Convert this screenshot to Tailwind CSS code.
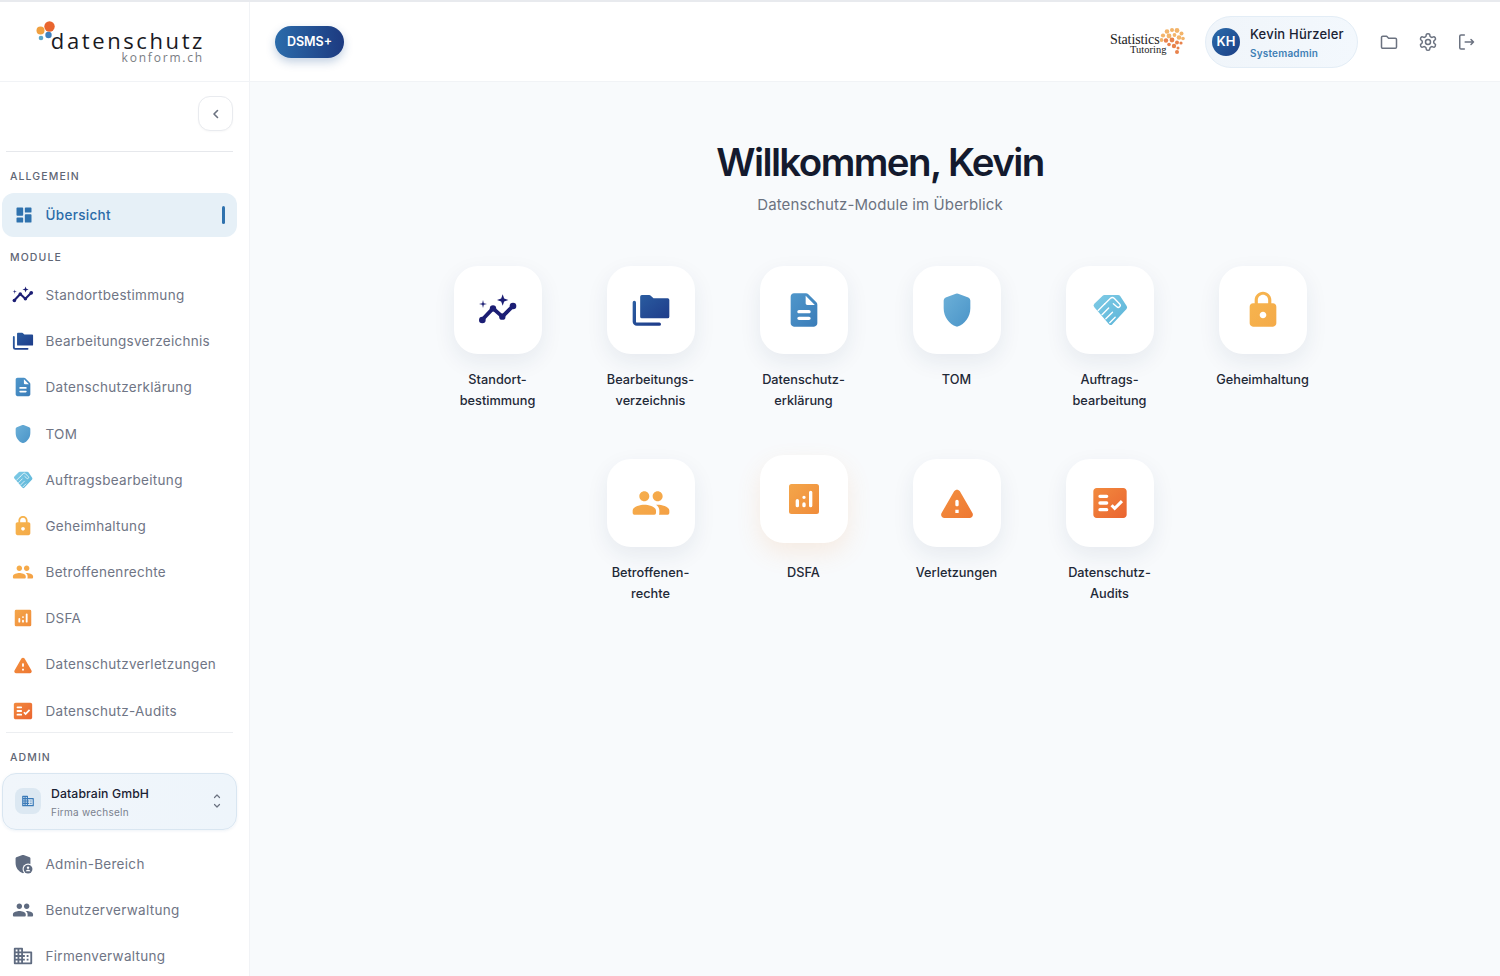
<!DOCTYPE html>
<html lang="de">
<head>
  <meta charset="UTF-8" />
  <title>DSMS+ Übersicht</title>
  <script src="https://cdn.jsdelivr.net/npm/@tailwindcss/browser@4"></script>
</head>
<body class="h-screen overflow-hidden bg-white font-['Inter',sans-serif] text-gray-800">
  <!-- shared icons + gradients -->
  <svg class="block h-0 w-0" aria-hidden="true">
    <defs>
      <linearGradient id="gNavy" x1="0" y1="0" x2="1" y2="1"><stop offset="0" stop-color="#1c1c70"/><stop offset="1" stop-color="#1b1f78"/></linearGradient>
      <linearGradient id="gFolder" x1="0" y1="0" x2="1" y2="1"><stop offset="0" stop-color="#2a5ca0"/><stop offset="1" stop-color="#1e3c8a"/></linearGradient>
      <linearGradient id="gDoc" x1="0" y1="0" x2="1" y2="1"><stop offset="0" stop-color="#4f97cb"/><stop offset="1" stop-color="#3a7cb8"/></linearGradient>
      <linearGradient id="gShield" x1="0" y1="0" x2="1" y2="1"><stop offset="0" stop-color="#6cb0d8"/><stop offset="1" stop-color="#4a94c8"/></linearGradient>
      <linearGradient id="gHand" x1="0" y1="0" x2="1" y2="1"><stop offset="0" stop-color="#80cbe6"/><stop offset="1" stop-color="#5ab4d8"/></linearGradient>
      <linearGradient id="gLock" x1="0" y1="0" x2="1" y2="1"><stop offset="0" stop-color="#f7b650"/><stop offset="1" stop-color="#f4aa48"/></linearGradient>
      <linearGradient id="gPeople" x1="0" y1="0" x2="1" y2="1"><stop offset="0" stop-color="#f6b04e"/><stop offset="1" stop-color="#f4a044"/></linearGradient>
      <linearGradient id="gDsfa" x1="0" y1="0" x2="1" y2="1"><stop offset="0" stop-color="#f4a64a"/><stop offset="1" stop-color="#f08c3a"/></linearGradient>
      <linearGradient id="gWarn" x1="0" y1="0" x2="1" y2="1"><stop offset="0" stop-color="#f39040"/><stop offset="1" stop-color="#ee7832"/></linearGradient>
      <linearGradient id="gAudit" x1="0" y1="0" x2="1" y2="1"><stop offset="0" stop-color="#f28a3e"/><stop offset="1" stop-color="#ea6430"/></linearGradient>

      <symbol id="i-dash" viewBox="0 0 24 24"><path d="M4 3h6a1 1 0 0 1 1 1v8a1 1 0 0 1-1 1H4a1 1 0 0 1-1-1V4a1 1 0 0 1 1-1zm0 12h6a1 1 0 0 1 1 1v4a1 1 0 0 1-1 1H4a1 1 0 0 1-1-1v-4a1 1 0 0 1 1-1zm10-4h6a1 1 0 0 1 1 1v8a1 1 0 0 1-1 1h-6a1 1 0 0 1-1-1v-8a1 1 0 0 1 1-1zm0-8h6a1 1 0 0 1 1 1v4a1 1 0 0 1-1 1h-6a1 1 0 0 1-1-1V4a1 1 0 0 1 1-1z"/></symbol>
      <symbol id="i-graph" viewBox="0 0 24 24">
        <path d="M2.400 18 9 11l5.600 5 6.400-6.400" fill="none" stroke="url(#gNavy)" stroke-width="2.300" stroke-linejoin="round"/>
        <circle cx="2.600" cy="18" r="2"/><circle cx="9" cy="11" r="1.900"/><circle cx="14.600" cy="16" r="1.900"/><circle cx="21" cy="9.600" r="2"/>
        <path d="m14.800 2.600.9 2.500 2.500.9-2.500.9-.9 2.500-.9-2.500-2.500-.9 2.500-.9z"/>
        <path d="m3 6 .45 1.950 1.950.45-1.950.45L3 10.800l-.45-1.950L.6 8.400l1.950-.45z"/>
      </symbol>
      <symbol id="i-folders" viewBox="0 0 24 24">
        <path d="M2 7.500V19a1.500 1.500 0 0 0 1.500 1.500H17" fill="none" stroke="url(#gFolder)" stroke-width="2" stroke-linecap="round"/>
        <path d="M6.500 3H11a1 1 0 0 1 .7.3L13.500 5H22a1 1 0 0 1 1 1v10a1 1 0 0 1-1 1H6.500a1 1 0 0 1-1-1V4a1 1 0 0 1 1-1z"/>
      </symbol>
      <symbol id="i-doc" viewBox="0 0 24 24"><path d="M14.590 2.590c-.38-.38-.89-.59-1.420-.59H6c-1.100 0-2 .9-2 2v16c0 1.100.89 2 1.990 2H18c1.100 0 2-.9 2-2V8.830c0-.53-.21-1.040-.59-1.410l-4.820-4.830zM15 18H9c-.55 0-1-.45-1-1s.45-1 1-1h6c.55 0 1 .45 1 1s-.45 1-1 1zm0-4H9c-.55 0-1-.45-1-1s.45-1 1-1h6c.55 0 1 .45 1 1s-.45 1-1 1zm-2-6V3.500L18.500 9H14c-.55 0-1-.45-1-1z"/></symbol>
      <symbol id="i-shield" viewBox="0 0 24 24"><path d="M11.300 2.200 5.200 4.500A2 2 0 0 0 4 6.300V11c0 5.200 3.400 9.700 7.600 10.900.3.1.5.1.8 0C16.600 20.700 20 16.200 20 11V6.300a2 2 0 0 0-1.200-1.800l-6.100-2.300a2 2 0 0 0-1.400 0z"/></symbol>
      <symbol id="i-hand" viewBox="0 0 24 24">
        <path d="M2.600 8.300 7.600 3.400a1.500 1.500 0 0 1 1-.4h8.300a1.500 1.500 0 0 1 1.100.5l4 6.100a1.500 1.500 0 0 1-.1 1.800l-8.500 9.100a1.400 1.400 0 0 1-2 0L2.600 10.400a1.500 1.500 0 0 1 0-2.100z"/>
        <g fill="none" stroke="#fff" stroke-width="0.8" stroke-linecap="round" stroke-linejoin="round">
          <path d="M8.800 8.400 12.300 5a1.600 1.600 0 0 1 2.200 0l3.300 3.400a1.200 1.200 0 0 1-1.700 1.700L14 8.200"/>
          <path d="m4.900 12.300 4-4m-1.700 6.500 4-4m-1.700 6.500 4-4m-1.700 6.300 3.300-3.300"/>
        </g>
      </symbol>
      <symbol id="i-lock" viewBox="0 0 24 24"><path d="M18 8h-1V6c0-2.760-2.240-5-5-5S7 3.240 7 6v2H6c-1.100 0-2 .9-2 2v10c0 1.100.9 2 2 2h12c1.100 0 2-.9 2-2V10c0-1.100-.9-2-2-2zm-6 9c-1.100 0-2-.9-2-2s.9-2 2-2 2 .9 2 2-.9 2-2 2zm3.100-9H8.900V6c0-1.710 1.390-3.100 3.100-3.100 1.710 0 3.100 1.390 3.100 3.100v2z"/></symbol>
      <symbol id="i-people" viewBox="0 0 24 24"><path d="M16 11c1.660 0 2.990-1.340 2.990-3S17.660 5 16 5c-1.660 0-3 1.340-3 3s1.340 3 3 3zm-8 0c1.660 0 2.990-1.340 2.990-3S9.660 5 8 5C6.340 5 5 6.340 5 8s1.340 3 3 3zm0 2c-2.330 0-7 1.170-7 3.500V18a1 1 0 0 0 1 1h12a1 1 0 0 0 1-1v-1.500c0-2.330-4.670-3.500-7-3.500zm8 0c-.29 0-.62.02-.97.05 1.160.84 1.970 1.970 1.970 3.450V18a3 3 0 0 1-.2 1H22a1 1 0 0 0 1-1v-1.500c0-2.330-4.670-3.500-7-3.500z"/></symbol>
      <symbol id="i-chart" viewBox="0 0 24 24"><path d="M4.500 3h15A1.500 1.500 0 0 1 21 4.500v15a1.500 1.500 0 0 1-1.500 1.500h-15A1.500 1.500 0 0 1 3 19.500v-15A1.500 1.500 0 0 1 4.500 3zM8 12a1 1 0 0 0-1 1v3a1 1 0 0 0 2 0v-3a1 1 0 0 0-1-1zm4 2a1 1 0 0 0-1 1v1a1 1 0 0 0 2 0v-1a1 1 0 0 0-1-1zm0-4a1 1 0 0 0-1 1 1 1 0 0 0 2 0 1 1 0 0 0-1-1zm4-3a1 1 0 0 0-1 1v8a1 1 0 0 0 2 0V8a1 1 0 0 0-1-1z" fill-rule="evenodd"/></symbol>
      <symbol id="i-warn" viewBox="0 0 24 24"><path d="M4.470 21h15.060c1.540 0 2.500-1.670 1.730-3L13.730 4.990c-.77-1.330-2.690-1.330-3.460 0L2.740 18c-.77 1.330.19 3 1.730 3zM12 14c-.55 0-1-.45-1-1v-2c0-.55.45-1 1-1s1 .45 1 1v2c0 .55-.45 1-1 1zm1 4h-2v-2h2v2z"/></symbol>
      <symbol id="i-audit" viewBox="0 0 24 24"><path d="M20 3H4c-1.100 0-2 .9-2 2v14c0 1.100.9 2 2 2h16c1.100 0 2-.9 2-2V5c0-1.100-.9-2-2-2zM10 17H6a1 1 0 0 1 0-2h4a1 1 0 0 1 0 2zm0-4H6a1 1 0 0 1 0-2h4a1 1 0 0 1 0 2zm0-4H6a1 1 0 0 1 0-2h4a1 1 0 0 1 0 2zm4.820 7.500L12.300 14l1.300-1.300 1.220 1.200 3.700-3.700 1.300 1.300z"/></symbol>
      <symbol id="i-admin" viewBox="0 0 24 24">
        <path d="M11.300 2.200 4.700 4.600A1.200 1.200 0 0 0 3.900 5.700V11c0 5.200 3.400 9.700 8.100 11 4.700-1.300 8.100-5.800 8.100-11V5.700a1.200 1.200 0 0 0-.8-1.100l-6.600-2.400a2 2 0 0 0-1.400 0z"/>
        <circle cx="17.500" cy="17.500" r="6" fill="#fff"/>
        <circle cx="17.500" cy="17.500" r="4.800"/>
        <circle cx="17.500" cy="16" r="1.300" fill="#fff"/>
        <path d="M15 20c.5-1.200 1.500-1.600 2.500-1.600s2 .4 2.500 1.600z" fill="#fff"/>
      </symbol>
      <symbol id="i-biz" viewBox="0 0 24 24"><path d="M12 7V4a1 1 0 0 0-1-1H3a1 1 0 0 0-1 1v16a1 1 0 0 0 1 1h18a1 1 0 0 0 1-1V8a1 1 0 0 0-1-1H12zM6 19H4v-2h2v2zm0-4H4v-2h2v2zm0-4H4V9h2v2zm0-4H4V5h2v2zm4 12H8v-2h2v2zm0-4H8v-2h2v2zm0-4H8V9h2v2zm0-4H8V5h2v2zm10 12h-8v-2h2v-2h-2v-2h2v-2h-2V9h8v10zm-2-8h-2v2h2v-2zm0 4h-2v2h2v-2z"/></symbol>
    </defs>
  </svg>

  <div class="h-[2px] bg-[#e8eaee]"></div>

  <!-- top bar -->
  <header class="flex h-[80px] border-b border-[#f1f3f6] bg-white">
    <div class="flex w-[250px] shrink-0 items-center justify-end border-r border-[#f1f3f6] pr-[47px]">
      <div class="relative w-[166px] pt-[10px]">
        <svg class="absolute left-0 -top-[1px] h-[26px] w-[24px]" viewBox="0 0 24 26">
          <circle cx="13.500" cy="7.500" r="5.200" fill="#e9652e"/>
          <circle cx="4.500" cy="11.500" r="4" fill="#f0a040"/>
          <circle cx="12.500" cy="16" r="3.200" fill="#3f80bd"/>
          <circle cx="5" cy="19" r="2.300" fill="#5ba7c9"/>
        </svg>
        <div class="-mr-[3px] text-right font-['Open_Sans',sans-serif] text-[22px] leading-[20px] tracking-[2.600px] text-[#1a1a1f]">datenschutz</div>
        <div class="-mr-[2px] mt-[2px] text-right font-['Open_Sans',sans-serif] text-[12px] leading-[12px] tracking-[1.800px] text-[#7a7d83]">konform.ch</div>
      </div>
    </div>
    <div class="flex flex-1 items-center pl-[25px] pr-[24px]">
      <button class="flex h-[32px] w-[69px] items-center justify-center rounded-full bg-gradient-to-r from-[#2b6cab] to-[#1d3a80] text-[12.500px] font-semibold leading-[32px] text-white shadow-[0_4px_10px_rgba(40,90,150,0.28)]">DSMS+</button>
      <div class="ml-auto flex items-center">
        <!-- statistics tutoring logo -->
        <div class="relative mr-[20px] h-[30px] w-[75px] font-['Liberation_Serif',serif] text-[#222]">
          <div class="pt-[8px] text-[14px] leading-[10px] tracking-[-0.1px]">Statistics</div>
          <div class="pl-[20px] text-[10.500px] leading-[10px]">Tutoring</div>
          <svg class="absolute right-0 top-0 h-[27px] w-[26px]" viewBox="0 0 26 27">
            <g fill="#f3b46a">
              <circle cx="8" cy="4.500" r="2.300"/><circle cx="13" cy="3" r="2"/><circle cx="18" cy="3.500" r="2.400"/><circle cx="22.500" cy="6.500" r="2"/>
              <circle cx="4" cy="8.500" r="2.100"/><circle cx="10" cy="9" r="2.400"/><circle cx="15.500" cy="8" r="1.900"/><circle cx="20" cy="10.500" r="2.300"/>
              <circle cx="24" cy="11.500" r="1.800"/><circle cx="2.500" cy="13" r="1.900"/>
            </g>
            <g fill="#e8824c">
              <circle cx="7" cy="13.500" r="2.200"/><circle cx="13" cy="13" r="2.400"/><circle cx="18" cy="15.500" r="2"/><circle cx="22" cy="16" r="1.600"/>
              <circle cx="10" cy="17.500" r="1.800"/><circle cx="15" cy="19" r="2.200"/><circle cx="18" cy="25" r="2"/><circle cx="19" cy="21" r="1.500"/>
            </g>
          </svg>
        </div>
        <div class="mr-[21px] flex h-[52px] w-[153px] items-center rounded-full border border-[#e3edf6] bg-gradient-to-r from-[#f0f5fa] to-[#f3f8fd] pl-[6px]">
          <div class="flex h-[28px] w-[28px] items-center justify-center rounded-full bg-gradient-to-br from-[#2b6cab] to-[#1d3f85] text-[13px] font-semibold text-white">KH</div>
          <div class="ml-[10px]">
            <div class="mt-[2px] text-[13px] font-medium leading-[20px] tracking-[0.2px] text-[#1a2233]">Kevin Hürzeler</div>
            <div class="mt-[1px] text-[10px] font-semibold leading-[16px] tracking-[0.2px] text-[#3f7fb5]">Systemadmin</div>
          </div>
        </div>
        <div class="flex items-center gap-[18.500px] text-[#6b7280]">
          <svg class="h-[20px] w-[20px]" viewBox="0 0 24 24" fill="none" stroke="currentColor" stroke-width="1.800" stroke-linejoin="round"><path d="M3 6.500A1.500 1.500 0 0 1 4.500 5h4.700l2.300 2.500h8A1.500 1.500 0 0 1 21 9v9a1.500 1.500 0 0 1-1.500 1.500h-15A1.500 1.500 0 0 1 3 18z"/></svg>
          <svg class="h-[20px] w-[20px]" viewBox="0 0 24 24" fill="none" stroke="currentColor" stroke-width="1.800" stroke-linejoin="round"><path d="M12.220 2h-.44a2 2 0 0 0-2 2v.18a2 2 0 0 1-1 1.730l-.43.250a2 2 0 0 1-2 0l-.15-.08a2 2 0 0 0-2.730.730l-.22.380a2 2 0 0 0 .73 2.730l.15.100a2 2 0 0 1 1 1.720v.510a2 2 0 0 1-1 1.740l-.15.090a2 2 0 0 0-.73 2.730l.22.380a2 2 0 0 0 2.730.730l.15-.08a2 2 0 0 1 2 0l.43.250a2 2 0 0 1 1 1.730V20a2 2 0 0 0 2 2h.44a2 2 0 0 0 2-2v-.18a2 2 0 0 1 1-1.730l.43-.25a2 2 0 0 1 2 0l.15.08a2 2 0 0 0 2.730-.73l.22-.39a2 2 0 0 0-.73-2.730l-.15-.08a2 2 0 0 1-1-1.740v-.5a2 2 0 0 1 1-1.740l.15-.09a2 2 0 0 0 .73-2.730l-.22-.38a2 2 0 0 0-2.730-.73l-.15.08a2 2 0 0 1-2 0l-.43-.25a2 2 0 0 1-1-1.730V4a2 2 0 0 0-2-2z"/><circle cx="12" cy="12" r="3"/></svg>
          <svg class="h-[20px] w-[20px]" viewBox="0 0 24 24" fill="none" stroke="currentColor" stroke-width="1.800" stroke-linecap="round" stroke-linejoin="round"><path d="M10 3.500H6A1.500 1.500 0 0 0 4.500 5v14A1.500 1.500 0 0 0 6 20.500h4"/><path d="M11 12h10M18 9l3 3-3 3"/></svg>
        </div>
      </div>
    </div>
  </header>

  <div class="flex h-[894px]">
    <!-- sidebar -->
    <aside class="w-[250px] shrink-0 overflow-hidden border-r border-[#f1f3f6] bg-white">
      <div class="ml-[6px] mr-[16px] flex h-[70px] items-start justify-end border-b border-[#e6e8ec] pt-[14px]">
        <button class="flex h-[35px] w-[35px] items-center justify-center rounded-xl border border-[#e9ebef] bg-white text-[#6b7280] shadow-[0_1px_2px_rgba(0,0,0,0.03)]">
          <svg class="h-[12px] w-[12px]" viewBox="0 0 12 12" fill="none" stroke="currentColor" stroke-width="1.600" stroke-linecap="round" stroke-linejoin="round"><path d="M7.500 2.500 4 6l3.500 3.500"/></svg>
        </button>
      </div>
      <div class="pl-[10px] pt-[17px] text-[10.500px] font-medium leading-[16px] tracking-[1.100px] text-[#5f6675]">ALLGEMEIN</div>
      <a class="ml-[2px] mt-[8px] flex h-[44px] w-[235px] items-center rounded-xl bg-[#e6f0f7] pl-[12px] pr-[12px] text-[#2a6ba8]">
        <svg class="h-[20px] w-[20px] fill-[#2f72ae]"><use href="#i-dash"/></svg>
        <span class="ml-[11.500px] text-[13.500px] font-medium tracking-[0.3px]">Übersicht</span>
        <span class="ml-auto h-[18px] w-[3px] rounded-full bg-[#2f72ae]"></span>
      </a>
      <div class="pl-[10px] pt-[13px] text-[10.500px] font-medium leading-[16px] tracking-[1.100px] text-[#5f6675]">MODULE</div>
      <nav id="moduleNav" class="mt-[6px]"></nav>
      <div class="ml-[6px] mr-[16px] -mt-[2px] border-t border-[#eceef1]"></div>
      <div class="pl-[10px] pt-[17px] text-[10.500px] font-medium leading-[16px] tracking-[1.100px] text-[#5f6675]">ADMIN</div>
      <div class="ml-[2px] mt-[7px] flex h-[57px] w-[235px] items-center rounded-[14px] border border-[#d9e6f1] bg-gradient-to-r from-[#f1f6fb] to-[#eef5fb] pl-[12px] pr-[14px] shadow-[0_1px_3px_rgba(40,90,150,0.08)]">
        <div class="flex h-[26px] w-[26px] items-center justify-center rounded-lg bg-[#dce8f2]">
          <svg class="h-[14px] w-[14px] fill-[#3a7ab8]"><use href="#i-biz"/></svg>
        </div>
        <div class="ml-[10px] pt-[2px]">
          <div class="text-[12.250px] font-medium leading-[18px] tracking-[0.1px] text-[#1a2233]">Databrain GmbH</div>
          <div class="mt-[1px] text-[10px] leading-[16px] tracking-[0.25px] text-[#7a818e]">Firma wechseln</div>
        </div>
        <svg class="ml-auto h-[16px] w-[10px] text-[#6b7280]" viewBox="0 0 10 16" fill="none" stroke="currentColor" stroke-width="1.200" stroke-linecap="round" stroke-linejoin="round"><path d="M2.500 4.500 5 2l2.500 2.500M2.500 11.500 5 14l2.500-2.500"/></svg>
      </div>
      <nav id="adminNav" class="mt-[11px]"></nav>
    </aside>

    <!-- main -->
    <main class="flex-1 bg-[#f8fafc] pl-[10px]">
      <h1 class="pt-[53px] text-center text-[38.500px] font-semibold leading-[54px] tracking-[-1.600px] text-[#141a2e]">Willkommen, Kevin</h1>
      <p class="mt-[4px] text-center text-[15px] leading-[24px] tracking-[0.1px] text-[#6b7280]">Datenschutz-Module im Überblick</p>
      <div id="tiles" class="mx-auto mt-[49px] flex w-[918px] flex-wrap justify-center"></div>
    </main>
  </div>

  <script>
    const modules = [
      { icon: 'i-graph',   fill: 'url(#gNavy)',   nav: 'Standortbestimmung',      label: 'Standort-<br>bestimmung' },
      { icon: 'i-folders', fill: 'url(#gFolder)', nav: 'Bearbeitungsverzeichnis', label: 'Bearbeitungs-<br>verzeichnis' },
      { icon: 'i-doc',     fill: 'url(#gDoc)',    nav: 'Datenschutzerklärung',    label: 'Datenschutz-<br>erklärung' },
      { icon: 'i-shield',  fill: 'url(#gShield)', nav: 'TOM',                     label: 'TOM' },
      { icon: 'i-hand',    fill: 'url(#gHand)',   nav: 'Auftragsbearbeitung',     label: 'Auftrags-<br>bearbeitung' },
      { icon: 'i-lock',    fill: 'url(#gLock)',   nav: 'Geheimhaltung',           label: 'Geheimhaltung' },
      { icon: 'i-people',  fill: 'url(#gPeople)', nav: 'Betroffenenrechte',       label: 'Betroffenen-<br>rechte' },
      { icon: 'i-chart',   fill: 'url(#gDsfa)',   nav: 'DSFA',                    label: 'DSFA', lifted: true },
      { icon: 'i-warn',    fill: 'url(#gWarn)',   nav: 'Datenschutzverletzungen', label: 'Verletzungen' },
      { icon: 'i-audit',   fill: 'url(#gAudit)',  nav: 'Datenschutz-Audits',      label: 'Datenschutz-<br>Audits' },
    ];
    const adminLinks = [
      { icon: 'i-admin',  nav: 'Admin-Bereich' },
      { icon: 'i-people', nav: 'Benutzerverwaltung' },
      { icon: 'i-biz',    nav: 'Firmenverwaltung' },
    ];

    function navRow(item, fill) {
      return `
        <a class="flex h-[46.200px] items-center pl-[12px]">
          <svg class="h-[22px] w-[22px]" style="fill:${fill}"><use href="#${item.icon}"/></svg>
          <span class="ml-[11.500px] text-[13.500px] tracking-[0.3px] text-[#6f7585]">${item.nav}</span>
        </a>`;
    }

    document.getElementById('moduleNav').innerHTML = modules.map(m => navRow(m, m.fill)).join('');
    document.getElementById('adminNav').innerHTML = adminLinks.map(a => navRow(a, '#5f6b80')).join('');

    document.getElementById('tiles').innerHTML = modules.map(m => `
      <div class="h-[193px] w-[153px] text-center">
        <div class="mx-auto flex h-[88px] w-[88px] items-center justify-center rounded-[24px] bg-white ${m.lifted ? '-translate-y-[4px] shadow-[0_10px_24px_rgba(240,150,70,0.14)]' : 'shadow-[0_8px_22px_rgba(30,50,90,0.08)]'}">
          <svg class="h-[40px] w-[40px]" style="fill:${m.fill}"><use href="#${m.icon}"/></svg>
        </div>
        <div class="mt-[15px] text-[12.750px] font-medium leading-[21px] text-[#1f2937]">${m.label}</div>
      </div>`).join('');
  </script>
</body>
</html>
